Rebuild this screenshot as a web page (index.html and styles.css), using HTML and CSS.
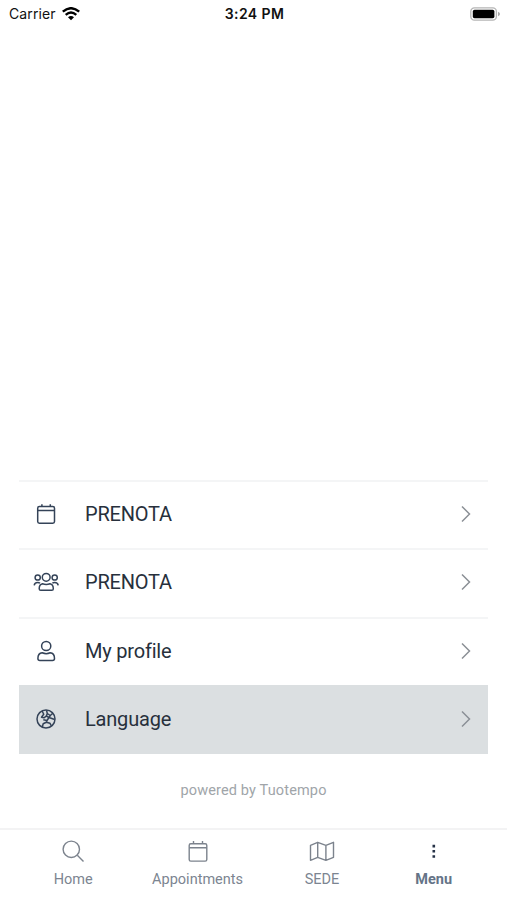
FILE: index.html
```html
<!DOCTYPE html>
<html lang="en">
<head>
<meta charset="utf-8">
<title>Menu</title>
<link rel="stylesheet" href="styles.css">
</head>
<body>
<div class="app">
  <header class="status">
    <div class="carrier"><span>Carrier</span>
      <svg width="18" height="14" viewBox="0 0 18 14" fill="none" stroke="#000" stroke-width="2.4"><path d="M.8 4.700Q9-2.300 17.200 4.700M3.700 7.800Q9 3.400 14.300 7.800"/><path d="M6 10.200Q9 7.800 12 10.200L9 13.200Z" fill="#000" stroke="none"/></svg>
    </div>
    <time class="time">3:24 PM</time>
    <svg class="battery" width="30" height="14" viewBox="0 0 30 14"><rect x=".8" y=".8" width="25.6" height="12.4" rx="3.6" fill="#fff" stroke="#b5b5b5" stroke-width="1.3"/><rect x="2.8" y="2.7" width="21.6" height="8.6" rx="1.7"/><path d="M28 4.8Q30 5.5 30 7T28 9.2Z" fill="#aaa"/></svg>
  </header>
  <main class="content">
    <nav class="list">
      <a class="row"><svg class="icon" viewBox="0 0 28 28"><rect x="5.700" y="6.500" width="16.800" height="16.800" rx="1.700"/><path d="M5.700 10.500h16.800M9.900 4.300v2.200M18.300 4.300v2.200"/></svg><span class="label">PRENOTA</span><svg class="chevron" viewBox="0 0 10 18"><path d="M1 1.500 8.500 9 1 16.500"/></svg></a>
      <a class="row"><svg class="icon" viewBox="0 0 28 28"><circle cx="14.200" cy="9.300" r="3.900"/><circle cx="5.700" cy="9.500" r="2.600"/><circle cx="22.700" cy="9.500" r="2.600"/><path d="M10.500 15.800Q14.200 17 18 15.800 21.300 16.500 21.300 20.700 21.300 22.300 19.800 22.300H8.700Q7.200 22.300 7.200 20.700 7.200 16.500 10.500 15.800ZM2.200 17.400Q2.500 14.500 5.700 14.500 7.200 14.500 8 15.300M26.200 17.400Q25.900 14.500 22.700 14.500 21.200 14.500 20.400 15.300"/></svg><span class="label">PRENOTA</span><svg class="chevron" viewBox="0 0 10 18"><path d="M1 1.500 8.500 9 1 16.500"/></svg></a>
      <a class="row"><svg class="icon" viewBox="0 0 28 28"><circle cx="14.200" cy="9" r="4.600"/><path d="M10.200 15.800Q14.200 17.500 18.200 15.800 22.500 16.200 22.500 21.500 22.500 23.500 20.500 23.500H7.900Q5.900 23.500 5.900 21.500 5.900 16.200 10.200 15.800Z"/></svg><span class="label">My profile</span><svg class="chevron" viewBox="0 0 10 18"><path d="M1 1.500 8.500 9 1 16.500"/></svg></a>
      <a class="row active"><svg class="icon" viewBox="0 0 28 28"><circle cx="14" cy="14" r="9"/><path d="M10.200 6 11.700 9.300 9.500 12.200 12 12.800 14.300 11 17 12.500 15 15.500 11.300 14.800M14.500 5.200 15.300 8.500 18.300 10.500 20.800 8.200M15.300 8.500 14.300 11M18.300 10.500 17 12.500 22.700 14.500M10.300 22 11.200 18.800 14.300 17.300 18 18.300 19.500 21M14.300 17.300 15 15.500"/></svg><span class="label">Language</span><svg class="chevron" viewBox="0 0 10 18"><path d="M1 1.500 8.500 9 1 16.500"/></svg></a>
    </nav>
    <p class="powered">powered by Tuotempo</p>
  </main>
  <nav class="tabs">
    <a class="tab"><svg class="tab-icon" viewBox="0 0 28 28"><circle cx="12.300" cy="12.300" r="8.200"/><path d="m18.300 18.300 6.200 6.200"/></svg><span>Home</span></a>
    <a class="tab"><svg class="tab-icon" viewBox="0 0 28 28"><rect x="5.200" y="6.800" width="17.600" height="17.300" rx="1.600"/><path d="M5.200 10.800h17.600M9.500 4v2.800M18.500 4v2.800"/></svg><span>Appointments</span></a>
    <a class="tab"><svg class="tab-icon" viewBox="0 0 28 28"><path d="m2.500 8.300 7.200-3 8.200 3 7.600-3v15l-7.600 3-8.200-3-7.200 3ZM9.700 5.300v15M17.900 8.300v15"/></svg><span>SEDE</span></a>
    <a class="tab current"><svg class="tab-icon dots" viewBox="0 0 28 28"><path d="M12.500 7.800h2.600v2.600h-2.600ZM12.500 13h2.600v2.600h-2.600ZM12.500 18.200h2.600v2.600h-2.600Z"/></svg><span>Menu</span></a>
  </nav>
</div>
</body>
</html>
```
FILE: styles.css
```css
* { box-sizing: border-box; }
body { margin: 0; background: #fff; font-family: Roboto, sans-serif; }
.app { height: 900px; display: flex; flex-direction: column; overflow: hidden; }
.status {
  height: 27px; padding: 0 7px 0 9px;
  display: grid; grid-template-columns: 1fr auto 1fr; align-items: center;
  font: 14px Inter, sans-serif; color: #111;
}
.carrier { display: flex; align-items: center; gap: 6px; letter-spacing: .1px; }
.time { font-weight: 600; letter-spacing: .4px; }
.battery { justify-self: end; }
.content { flex: 1; display: flex; flex-direction: column; justify-content: flex-end; padding: 0 19px; }
.list { display: flex; flex-direction: column; }
.row {
  height: 68.500px; display: flex; align-items: center;
  padding: 0 17px 2px 13px; border-top: 2px solid #f4f5f6; color: #27303c;
}
.row.active { background: #dbdfe1; border-color: #dbdfe1; }
.icon { width: 28px; height: 28px; fill: none; stroke: #344358; stroke-width: 1.500; stroke-linejoin: round; }
.label { flex: 1; margin-left: 25px; font-size: 20px; line-height: 24px; letter-spacing: -.2px; }
.chevron { width: 10px; height: 18px; fill: none; stroke: #8b9096; stroke-width: 1.500; }
.powered { margin: 0; height: 74.500px; padding-top: 28px; text-align: center; color: #a0a5a9; font-size: 14.500px; line-height: 18px; letter-spacing: .15px; }
.tabs {
  height: 72px; display: grid; grid-template-columns: 124.400px 124.400px 124.400px 99px;
  padding-left: 11px; border-top: 2px solid #f3f3f4;
}
.tab { display: flex; flex-direction: column; align-items: center; padding-top: 7px; color: #7c8591; font-size: 14.500px; line-height: 18px; }
.tab span { margin-top: 6px; }
.tab-icon { width: 28px; height: 28px; fill: none; stroke: #7c838d; stroke-width: 1.400; stroke-linejoin: round; }
.dots { fill: #263247; stroke: none; }
.current { color: #657487; font-weight: 700; }
```
